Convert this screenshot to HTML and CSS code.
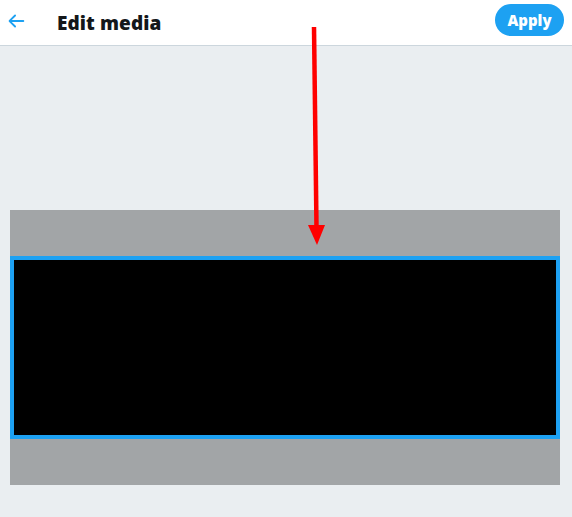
FILE: index.html
```html
<!DOCTYPE html>
<html>
<head>
<meta charset="utf-8">
<link rel="stylesheet" href="styles.css">
</head>
<body>
<header class="topbar">
  <button class="back" aria-label="Back">
    <svg viewBox="0 0 24 24" width="22" height="22"><path d="M20 11H7.414l4.293-4.293a1 1 0 0 0-1.414-1.414l-6 6a1 1 0 0 0 0 1.414l6 6a.996.996 0 0 0 1.414 0 1 1 0 0 0 0-1.414L7.414 13H20a1 1 0 1 0 0-2z" fill="#1da1f2"/></svg>
  </button>
  <h1 class="title">Edit media</h1>
  <button class="apply">Apply</button>
</header>
<main class="stage">
  <div class="canvas">
    <div class="crop"></div>
  </div>
</main>
<svg class="annotation" width="572" height="517" viewBox="0 0 572 517">
  <line x1="314" y1="27" x2="316.5" y2="228" stroke="#ff0000" stroke-width="4.5"/>
  <polygon points="308,225 325,225 317,245" fill="#ff0000"/>
</svg>
</body>
</html>
```
FILE: styles.css
```css
html, body {
  margin: 0;
  padding: 0;
}
body {
  width: 572px;
  height: 517px;
  background: #eaeef1;
  font-family: "Open Sans", "Liberation Sans", sans-serif;
  position: relative;
  overflow: hidden;
}
.topbar {
  height: 45px;
  background: #ffffff;
  border-bottom: 1px solid #ccd6dd;
  display: flex;
  align-items: center;
  padding: 0 8px 0 5px;
}
.back {
  border: none;
  background: none;
  padding: 0;
  width: 22px;
  height: 22px;
  margin-top: -3px;
  display: flex;
}
.title {
  margin: 0 0 0 30px;
  font-size: 19px;
  font-weight: 800;
  color: #14171a;
  flex: 1;
  letter-spacing: 0.1px;
  line-height: 24px;
}
.apply {
  border: none;
  background: #1da1f2;
  color: #ffffff;
  font-family: "Open Sans", "Liberation Sans", sans-serif;
  font-weight: 800;
  font-size: 15px;
  height: 32px;
  width: 69px;
  border-radius: 16px;
  padding: 0;
  margin-top: -5px;
}
.stage {
  padding: 164px 12px 0 10px;
}
.canvas {
  width: 550px;
  background: #a2a5a7;
  padding: 46px 0;
}
.crop {
  height: 175px;
  background: #000000;
  border: 4px solid #1da1f2;
}
.annotation {
  position: absolute;
  left: 0;
  top: 0;
  pointer-events: none;
}
```
